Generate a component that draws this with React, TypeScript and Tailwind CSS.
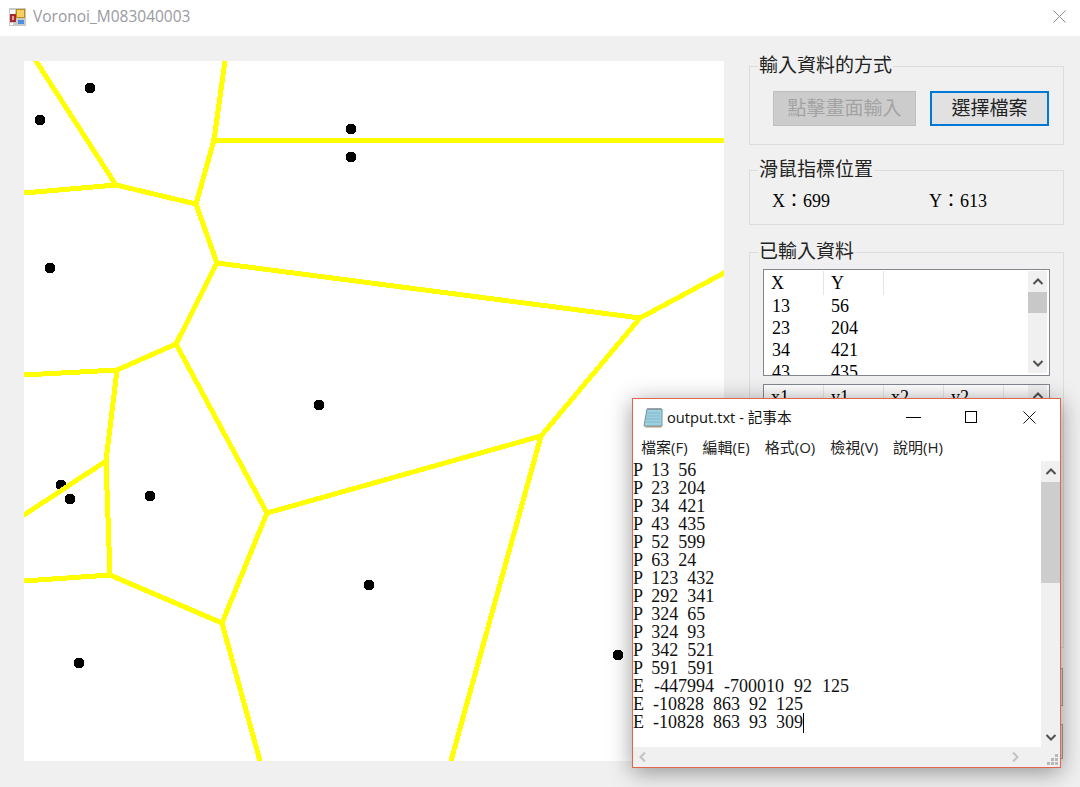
const lines = [
  [36, 61, 116, 185],
  [24, 193, 116, 185],
  [116, 185, 196, 204],
  [225, 61, 214, 140],
  [214, 140, 196, 204],
  [213, 140, 724, 140],
  [196, 204, 217, 263],
  [217, 263, 640, 318],
  [640, 318, 724, 273],
  [217, 263, 176, 344],
  [176, 344, 117, 370],
  [24, 375, 117, 370],
  [117, 370, 106, 461],
  [106, 461, 24, 515],
  [106, 461, 110, 575],
  [24, 581, 110, 575],
  [110, 575, 222, 623],
  [176, 344, 267, 513],
  [267, 513, 222, 623],
  [267, 513, 541, 436],
  [640, 318, 541, 436],
  [541, 436, 451, 761],
  [222, 623, 260, 761],
];

const dots = [
  [90, 88],
  [40, 120],
  [351, 129],
  [351, 157],
  [50, 268],
  [319, 405],
  [61, 485],
  [70, 499],
  [150, 496],
  [369, 585],
  [79, 663],
  [618, 655],
];

const points = [
  ["13", "56"],
  ["23", "204"],
  ["34", "421"],
  ["43", "435"],
];

const output = [
  "P  13  56",
  "P  23  204",
  "P  34  421",
  "P  43  435",
  "P  52  599",
  "P  63  24",
  "P  123  432",
  "P  292  341",
  "P  324  65",
  "P  324  93",
  "P  342  521",
  "P  591  591",
];

const Chevron = ({ dir, color = "#505050" }: { dir: "up" | "down" | "left" | "right"; color?: string }) => {
  const d = {
    up: "M2.5 9 L7 4.5 L11.5 9",
    down: "M2.5 5 L7 9.5 L11.5 5",
    left: "M9 2.5 L4.5 7 L9 11.5",
    right: "M5 2.5 L9.5 7 L5 11.5",
  }[dir];
  return (
    <svg width="14" height="14" viewBox="0 0 14 14" fill="none">
      <path d={d} stroke={color} strokeWidth="2" />
    </svg>
  );
};

const Group = ({ title, children, className }: { title: string; children: React.ReactNode; className: string }) => (
  <fieldset className={`border border-[#dcdcdc] ${className}`}>
    <legend className="ml-[8px] px-px text-[19px] leading-[20px] text-[#222]">{title}</legend>
    {children}
  </fieldset>
);

const HeaderCell = ({ label }: { label: string }) => (
  <div className="w-[60px] border-r border-[#e5e5e5] pl-[7px] text-[18px] leading-[24px]">{label}</div>
);

const ListScrollbar = () => (
  <div className="my-px ml-auto mr-[2px] flex h-[102px] w-[19px] shrink-0 flex-col items-center bg-[#f0f0f0]">
    <div className="flex h-[21px] items-center"><Chevron dir="up" /></div>
    <div className="h-[21px] w-full bg-[#c8c8c8]" />
    <div className="mt-auto flex h-[21px] items-center"><Chevron dir="down" /></div>
  </div>
);

const AppIcon = () => (
  <svg width="17" height="18" viewBox="0 0 17 18" className="shrink-0">
    <rect width="17" height="18" fill="#c9c9c9" />
    <rect x="1" y="2" width="5" height="4" fill="#fff" />
    <rect x="7" y="1" width="9" height="9" fill="#b98a1e" />
    <rect x="8" y="2" width="7" height="7" fill="#f8d25c" />
    <rect x="1" y="6" width="6" height="8" fill="#a82a2a" />
    <rect x="3" y="8" width="2" height="4" fill="#e8a0a0" />
    <rect x="9" y="12" width="6" height="4" fill="#4d8ede" />
    <rect x="1" y="15" width="3" height="2" fill="#fff" />
  </svg>
);

const NotepadIcon = () => (
  <svg width="20" height="21" viewBox="0 0 20 21" className="shrink-0">
    <path d="M4 2 H19 V19 H1 Z" fill="#9fd0de" stroke="#6d94a5" />
    <path d="M3 19 H18.5 V20.5 H2 Z" fill="#a89a80" />
    <path d="M5 2 H18 M5 1 V3 M8 1 V3 M11 1 V3 M14 1 V3 M17 1 V3" stroke="#8a8f94" />
    <path d="M4 6 H17 M4 9 H17 M3 12 H17 M3 15 H17" stroke="#7fb8cb" />
  </svg>
);

const Notepad = () => (
  <div className="absolute left-[632px] top-[398px] flex h-[370px] w-[429px] flex-col border border-[#e2664e] bg-white shadow-[0_4px_22px_rgba(0,0,0,0.4)]">
    <div className="flex h-[36px] shrink-0 items-center pl-[10px] font-['Open_Sans','Noto_Sans_CJK_TC',sans-serif] text-[14.7px] text-[#111]">
      <NotepadIcon />
      <span className="ml-[4px]">output.txt - 記事本</span>
      <div className="ml-auto mr-[2px] flex items-center">
        <div className="flex w-[58px] justify-center">
          <div className="h-px w-[15px] bg-black" />
        </div>
        <div className="flex w-[58px] justify-center">
          <div className="h-[12px] w-[12px] border border-black" />
        </div>
        <div className="flex w-[58px] justify-center">
          <svg width="13" height="13" viewBox="0 0 13 13"><path d="M0.5 0.5 L12.5 12.5 M12.5 0.5 L0.5 12.5" stroke="#111" /></svg>
        </div>
      </div>
    </div>
    <div className="flex h-[26px] shrink-0 items-center gap-[15px] pb-[2px] pl-[8px] font-['Open_Sans','Noto_Sans_CJK_TC',sans-serif] text-[15px] text-[#222]">
      <span>檔案(F)</span>
      <span>編輯(E)</span>
      <span>格式(O)</span>
      <span>檢視(V)</span>
      <span>說明(H)</span>
    </div>
    <div className="flex min-h-0 flex-1">
      <div className="flex-1 whitespace-pre text-[18px] leading-[18px] text-[#111]">
        {output.map((row, i) => (
          <div key={i}>{row}</div>
        ))}
        <div className="[word-spacing:0.5px]">E  -447994  -700010  92  125</div>
        <div>E  -10828  863  92  125</div>
        <div className="flex">
          <span>E  -10828  863  93  309</span>
          <span className="h-[20px] w-px bg-black" />
        </div>
      </div>
      <div className="flex w-[19px] shrink-0 flex-col items-center bg-[#f0f0f0]">
        <div className="flex h-[21px] items-center"><Chevron dir="up" /></div>
        <div className="h-[101px] w-full bg-[#cdcdcd]" />
        <div className="mt-auto flex h-[21px] items-center"><Chevron dir="down" /></div>
      </div>
    </div>
    <div className="flex h-[20px] shrink-0 items-center bg-[#f0f0f0] pl-[3px]">
      <Chevron dir="left" color="#c2c2c2" />
      <div className="ml-auto mr-[24px]"><Chevron dir="right" color="#c2c2c2" /></div>
      <svg width="13" height="13" viewBox="0 0 13 13" className="mr-px mt-[6px]" fill="#b8b8b8">
        <rect x="9" y="0" width="3" height="3" />
        <rect x="5" y="4" width="3" height="3" />
        <rect x="9" y="4" width="3" height="3" />
        <rect x="1" y="8" width="3" height="3" />
        <rect x="5" y="8" width="3" height="3" />
        <rect x="9" y="8" width="3" height="3" />
      </svg>
    </div>
  </div>
);

export default function App() {
  return (
    <div className="relative h-[787px] w-[1080px] overflow-hidden bg-[#f0f0f0] font-['Liberation_Serif','Noto_Sans_CJK_TC',serif] text-black">
      <div className="flex h-[36px] items-center bg-white pb-[3px] pl-[9px] pr-[14px]">
        <AppIcon />
        <span className="ml-[7px] font-['Open_Sans',sans-serif] text-[15.5px] text-[#9a9aa2]">Voronoi_M083040003</span>
        <svg width="13" height="13" viewBox="0 0 13 13" className="ml-auto"><path d="M0.5 0.5 L12.5 12.5 M12.5 0.5 L0.5 12.5" stroke="#8c8c8c" /></svg>
      </div>

      <div className="flex pl-[24px] pt-[20px]">
        <svg width="700" height="700" viewBox="24 61 700 700" className="mt-[5px] shrink-0 bg-white" shapeRendering="crispEdges">
          {dots.map(([cx, cy], i) => (
            <circle key={i} cx={cx} cy={cy} r="5.5" fill="#000" />
          ))}
          {lines.map(([x1, y1, x2, y2], i) => (
            <line key={i} x1={x1} y1={y1} x2={x2} y2={y2} stroke="#ffff00" strokeWidth="5" strokeLinecap="round" />
          ))}
        </svg>

        <div className="ml-[25px] flex w-[315px] flex-col">
          <Group title="輸入資料的方式" className="h-[89px]">
            <div className="flex gap-[14px] pl-[23px] pt-[15px]">
              <button className="h-[35px] w-[143px] border border-[#bfbfbf] bg-[#cccccc] pt-[2px] text-[19px] text-[#a3a3a3]">點擊畫面輸入</button>
              <button className="h-[35px] w-[119px] border-2 border-[#0078d7] bg-[#e1e1e1] pt-[2px] text-[19px] text-[#222]">選擇檔案</button>
            </div>
          </Group>

          <Group title="滑鼠指標位置" className="mt-[15px] h-[65px]">
            <div className="flex pl-[22px] pt-[10px] text-[18px] leading-[22px]">
              <span className="w-[157px]">X：699</span>
              <span>Y：613</span>
            </div>
          </Group>

          <Group title="已輸入資料" className="mt-[17px] h-[406px]">
            <div className="px-[13px] pt-[7px]">
              <div className="flex h-[107px] w-[287px] overflow-hidden border border-[#82878f] bg-white">
                <div className="min-w-0">
                  <div className="mt-px flex">
                    <HeaderCell label="X" />
                    <HeaderCell label="Y" />
                  </div>
                  {points.map(([x, y]) => (
                    <div key={x} className="flex text-[18px] leading-[22px]">
                      <div className="w-[60px] pl-[8px]">{x}</div>
                      <div className="w-[60px] pl-[7px]">{y}</div>
                    </div>
                  ))}
                </div>
                <ListScrollbar />
              </div>
              <div className="mt-[8px] h-[250px] w-[287px] border border-[#82878f] bg-white">
                <div className="flex h-[24px] bg-gradient-to-b from-white to-[#f0f0f0]">
                  <HeaderCell label="x1" />
                  <HeaderCell label="y1" />
                  <HeaderCell label="x2" />
                  <HeaderCell label="y2" />
                  <div className="ml-auto mr-[2px] flex h-[21px] w-[19px] items-center justify-center bg-[#f0f0f0]"><Chevron dir="up" /></div>
                </div>
              </div>
            </div>
          </Group>

          <button className="mt-[20px] h-[38px] w-[314px] border border-[#a0a0a0] bg-[#e1e1e1]" />
          <button className="mt-[18px] h-[35px] w-[314px] border border-[#a0a0a0] bg-[#e1e1e1]" />
        </div>
      </div>

      <Notepad />
    </div>
  );
}
